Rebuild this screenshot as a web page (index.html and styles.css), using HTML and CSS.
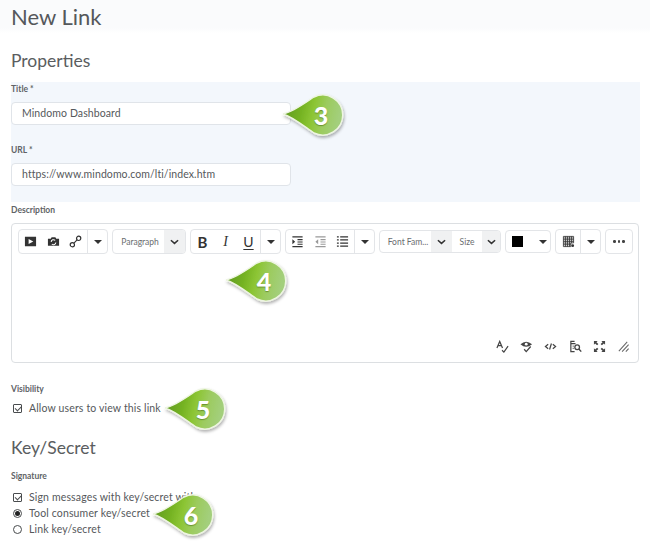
FILE: index.html
```html
<!DOCTYPE html>
<html lang="en">
<head>
<meta charset="utf-8">
<title>New Link</title>
<link rel="stylesheet" href="styles.css">
</head>
<body>
<svg class="defs" width="0" height="0" aria-hidden="true">
  <defs>
    <linearGradient id="gbody" x1="0" y1="0" x2="1" y2="0.15">
      <stop offset="0" stop-color="#5d9624"/>
      <stop offset="0.35" stop-color="#74b222"/>
      <stop offset="0.55" stop-color="#8cc534"/>
      <stop offset="0.75" stop-color="#9ccb5e"/>
      <stop offset="1" stop-color="#a3cf7c"/>
    </linearGradient>
    <filter id="cshadow" x="-20%" y="-20%" width="140%" height="150%">
      <feDropShadow dx="1" dy="2" stdDeviation="1.500" flood-color="#000" flood-opacity="0.3"/>
    </filter>
    <symbol id="callout" viewBox="0 0 66 52">
      <path d="M2 25 C12 23 24 14 33 8 A20 20 0 1 1 33 44 C24 38 12 28 2 25Z" fill="url(#gbody)" stroke="#eef5e2" stroke-width="1.400" filter="url(#cshadow)"/>
    </symbol>
  </defs>
</svg>
<main class="page">
  <header class="page-head"><h1>New Link</h1></header>
  <h2 class="props-title">Properties</h2>
  <section class="panel">
    <label class="lbl">Title *</label>
    <div class="input">Mindomo Dashboard</div>
    <label class="lbl url-lbl">URL *</label>
    <div class="input">https://www.mindomo.com/lti/index.htm</div>
  </section>
  <label class="lbl desc-lbl">Description</label>
  <section class="editor">
    <div class="toolbar">
      <div class="grp g1">
        <span class="tb"><svg viewBox="0 0 14 14" class="ic"><path fill="#333" d="M1 2h12v10H1z"/><path fill="#fff" d="M5 4.200v5.600L10 7z"/></svg></span>
        <span class="tb"><svg viewBox="0 0 14 14" class="ic"><path fill="#333" d="M1 4h3l1-1.500h4L10 4h3v7.500H1z"/><path d="M4.500 7.500a2.500 2.500 0 0 1 4.300-1.700M9.500 8a2.500 2.500 0 0 1-4.300 1.700" fill="none" stroke="#fff" stroke-width="1.100"/></svg></span>
        <span class="tb"><svg viewBox="0 0 14 14" class="ic"><g fill="none" stroke="#333" stroke-width="1.300"><circle cx="3.600" cy="10.400" r="2.300"/><circle cx="10.400" cy="3.600" r="2.300"/><path d="M5.300 8.700l3.400-3.400"/></g></svg></span>
        <span class="tb caret sep"><i class="tri"></i></span>
      </div>
      <div class="grp g2">
        <span class="sel par">Paragraph</span>
        <span class="chev"><svg viewBox="0 0 10 6"><path d="M1 1l4 3.600L9 1" fill="none" stroke="#333" stroke-width="1.700"/></svg></span>
      </div>
      <div class="grp g3">
        <span class="tb fmt b">B</span>
        <span class="tb fmt i">I</span>
        <span class="tb fmt u">U</span>
        <span class="tb caret sep"><i class="tri"></i></span>
      </div>
      <div class="grp g4">
        <span class="tb"><svg viewBox="0 0 14 14" class="ic"><path stroke="#333" stroke-width="1.200" fill="none" d="M1.500 2h11M7 5h5.500M7 7.500h5.500M7 10h5.500M1.500 12.500h11"/><path fill="#333" d="M1.500 4.500l3 2.700-3 2.700z"/></svg></span>
        <span class="tb"><svg viewBox="0 0 14 14" class="ic"><path stroke="#999" stroke-width="1.200" fill="none" d="M1.500 2h11M7 5h5.500M7 7.500h5.500M7 10h5.500M1.500 12.500h11"/><path fill="#999" d="M4.500 4.500l-3 2.700 3 2.700z"/></svg></span>
        <span class="tb"><svg viewBox="0 0 14 14" class="ic"><path stroke="#333" stroke-width="1.200" fill="none" d="M4.500 2h8.500M4.500 5.300h8.500M4.500 8.700h8.500M4.500 12h8.500M1 2h2M1 5.300h2M1 8.700h2M1 12h2"/></svg></span>
        <span class="tb caret sep"><i class="tri"></i></span>
      </div>
      <div class="grp g5">
        <span class="sel fam">Font Fam...</span>
        <span class="chev"><svg viewBox="0 0 10 6"><path d="M1 1l4 3.600L9 1" fill="none" stroke="#333" stroke-width="1.700"/></svg></span>
        <span class="sel size">Size</span>
        <span class="chev last"><svg viewBox="0 0 10 6"><path d="M1 1l4 3.600L9 1" fill="none" stroke="#333" stroke-width="1.700"/></svg></span>
      </div>
      <div class="grp g6">
        <span class="swatch"></span>
        <span class="tb caret"><i class="tri"></i></span>
      </div>
      <div class="grp g7">
        <span class="tb tbl"><svg viewBox="0 0 14 14" class="ic"><path stroke="#333" stroke-width=".9" fill="none" d="M1.500 1.500h11v7h-3v4h-8zM1.500 3.300h11M1.500 5.100h11M1.500 6.900h11M1.500 8.700h8M1.500 10.500h8M3.700 1.500v11M5.900 1.500v11M8.100 1.500v11M10.300 1.500v7"/><circle cx="11.500" cy="11.500" r="1.500" fill="#333"/></svg></span>
        <span class="tb caret sep"><i class="tri"></i></span>
      </div>
      <div class="grp g8"><span class="dots"><i></i><i></i><i></i></span></div>
    </div>
    <div class="edit-foot">
      <svg viewBox="0 0 14 14" class="ic foot"><path d="M1 8.500L4 1.500l3 7M2.200 6h3.600M6.500 11l2 2L13 6.500" fill="none" stroke="#444" stroke-width="1.300"/></svg>
      <svg viewBox="0 0 14 14" class="ic foot"><path d="M.5 4.500Q6.500-1 13 4.500Q6.500 10 .5 4.500Z" fill="#444"/><circle cx="6.700" cy="4.500" r="1.500" fill="#fff"/><path d="M4.500 10l2.200 2.500L11.500 7" fill="none" stroke="#444" stroke-width="1.400"/></svg>
      <svg viewBox="0 0 14 14" class="ic foot"><path d="M4.500 4.500L1.500 7l3 2.500M9.500 4.500l3 2.500-3 2.500M8 3.800L6 10.200" fill="none" stroke="#444" stroke-width="1.300"/></svg>
      <svg viewBox="0 0 14 14" class="ic foot"><path d="M6 1.500H2v11h4M2 4h5M4 6.500h1M4 9h1" fill="none" stroke="#444" stroke-width="1.300"/><circle cx="8.800" cy="7.800" r="2.500" fill="none" stroke="#444" stroke-width="1.400"/><path d="M10.600 9.600l2.600 2.900" stroke="#444" stroke-width="1.500"/></svg>
      <svg viewBox="0 0 14 14" class="ic foot"><path fill="#444" d="M1 1h4L3.700 2.300l2.100 2-1.400 1.400-2.100-2L1 5zM13 1v4l-1.300-1.300-2.100 2-1.400-1.400 2.100-2L9 1zM1 13V9l1.300 1.300 2.100-2 1.400 1.400-2.100 2L5 13zM13 13H9l1.300-1.300-2.100-2 1.400-1.400 2.100 2L13 9z"/></svg>
      <svg viewBox="0 0 14 14" class="ic foot"><path d="M2 12L11 2M5.500 12.500L12.500 5M9.500 12.500l3-3.300" fill="none" stroke="#666" stroke-width="1.100"/></svg>
    </div>
  </section>
  <label class="lbl vis-lbl">Visibility</label>
  <div class="opt"><span class="cb"></span>Allow users to view this link</div>
  <h2 class="key-title">Key/Secret</h2>
  <label class="lbl sig-lbl">Signature</label>
  <div class="opts">
    <div class="opt"><span class="cb"></span>Sign messages with key/secret with</div>
    <div class="opt"><span class="rb on"></span>Tool consumer key/secret</div>
    <div class="opt"><span class="rb"></span>Link key/secret</div>
  </div>
</main>
<div class="callout c3"><svg viewBox="0 0 66 52"><use href="#callout"/></svg><b>3</b></div>
<div class="callout c4"><svg viewBox="0 0 66 52"><use href="#callout"/></svg><b>4</b></div>
<div class="callout c5"><svg viewBox="0 0 66 52"><use href="#callout"/></svg><b>5</b></div>
<div class="callout c6"><svg viewBox="0 0 66 52"><use href="#callout"/></svg><b>6</b></div>
</body>
</html>
```
FILE: styles.css
```css
* { box-sizing: border-box; }
html, body { margin: 0; height: 559px; overflow: hidden; }
body { background: #fff; font-family: Lato, "Noto Sans", sans-serif; color: #494c4e; position: relative; }
.defs { position: absolute; }
.page { padding: 0 10px 0 11px; }
.page-head { margin: 0 -10px 0 -11px; padding: 2px 0 0 11px; height: 33px; background: linear-gradient(#fafbfc, #fafbfc 85%, #fff); }
h1 { margin: 0; font-size: 22px; line-height: 30px; font-weight: 400; color: #55585b; }
h2 { margin: 0; font-size: 17.500px; line-height: 22px; font-weight: 400; color: #5a5d60; }
.props-title { margin-top: 17px; }
.lbl { display: block; font-size: 8.500px; line-height: 11px; font-weight: 700; color: #606366; }
.panel { background: #f3f7fc; height: 120px; margin-top: 10px; padding-top: 2px; }
.input { width: 280px; height: 23px; margin-top: 7px; padding-left: 10px; background: #fff; border: 1px solid #e0e4e9; border-radius: 4px; font-size: 10.500px; line-height: 21px; letter-spacing: .09px; color: #55585b; }
.panel .url-lbl { margin-top: 20px; }
.panel .url-lbl + .input { margin-top: 7px; }
.desc-lbl { margin-top: 3px; }
.editor { height: 140px; margin: 7px 1px 0 0; border: 1px solid #dcdfe2; border-radius: 4px; background: #fff; display: flex; flex-direction: column; justify-content: space-between; padding: 5px 6px 9px; }
.toolbar { display: flex; height: 26px; gap: 4px; }
.grp { display: flex; align-items: stretch; border: 1px solid #e3e5e8; border-radius: 4px; height: 25px; overflow: hidden; background: #fff; flex: none; }
.g1 { width: 90px; }
.g2 { width: 74px; }
.g3 { width: 91px; }
.g4 { width: 90px; }
.g5 { width: 122px; height: 23px; margin-top: 1px; }
.g6 { width: 46px; height: 23px; margin-top: 1px; }
.g7 { width: 46px; }
.g8 { width: 28px; justify-content: center; align-items: center; }
.tb { flex: 1 1 0; display: flex; align-items: center; justify-content: center; min-width: 0; }
.caret { flex: 0 0 20px; }
.sep { border-left: 1px solid #e3e5e8; }
.tri { width: 0; height: 0; border: 4px solid transparent; border-top: 4px solid #333; border-bottom: 0; }
.ic { width: 13px; height: 13px; display: block; }
.sel { display: flex; align-items: center; justify-content: center; font-size: 8.500px; color: #6a6d70; white-space: nowrap; }
.par { flex: 1; padding-left: 3px; }
.fam { flex: 1; padding-left: 5px; }
.size { flex: 0 0 30px; }
.chev { flex: 0 0 21px; background: #f0f1f2; display: flex; align-items: center; justify-content: center; }
.chev.last { flex-basis: 18px; }
.chev svg { width: 9px; height: 6px; }
.fmt { font-size: 14px; color: #333; }
.b { font-weight: 700; font-size: 15px; }
.i { font-family: "Liberation Serif", serif; font-style: italic; }
.u { text-decoration: underline; text-underline-offset: 2px; }
.swatch { width: 11px; height: 11px; margin: 5px 0 0 6px; background: #000; flex: none; }
.g6 .caret { flex: 1; padding-left: 12px; }
.tbl { flex: 1; }
.dots { display: flex; gap: 2px; }
.dots i { width: 2.500px; height: 2.500px; background: #444; border-radius: 50%; }
.edit-foot { display: flex; justify-content: flex-end; gap: 11.200px; padding-right: 2px; }
.foot { width: 13px; height: 13px; }
.vis-lbl { margin-top: 21px; }
.opt { display: flex; align-items: center; font-size: 10.500px; line-height: 16px; letter-spacing: .15px; color: #55585b; white-space: nowrap; }
.vis-lbl + .opt { margin-top: 5px; }
.cb { width: 9px; height: 9px; border: 1px solid #494c4e; border-radius: 1px; margin: 0 7px 0 2px; flex: none; position: relative; }
.cb::after { content: ""; position: absolute; left: 1px; top: 1px; width: 5px; height: 2.500px; border-left: 1px solid #494c4e; border-bottom: 1px solid #494c4e; transform: rotate(-45deg); }
.rb { width: 9px; height: 9px; border: 1px solid #494c4e; border-radius: 50%; margin: 0 7px 0 2px; flex: none; position: relative; }
.rb.on::after { content: ""; position: absolute; inset: 1px; background: #222; border-radius: 50%; }
.key-title { margin-top: 21px; }
.sig-lbl { margin-top: 12px; }
.opts { margin-top: 7px; }
.callout { position: absolute; width: 66px; height: 52px; }
.callout svg { width: 66px; height: 52px; display: block; overflow: visible; }
.callout b { position: absolute; left: 14px; right: 0; top: 10px; text-align: center; font-size: 25px; line-height: 32px; font-weight: 900; color: #fff; text-shadow: 0 1px 1px rgba(60,90,10,.5); }
.c3 { left: 281px; top: 89px; }
.c4 { left: 224px; top: 255px; }
.c5 { left: 163px; top: 383px; }
.c6 { left: 151px; top: 489px; }
```
